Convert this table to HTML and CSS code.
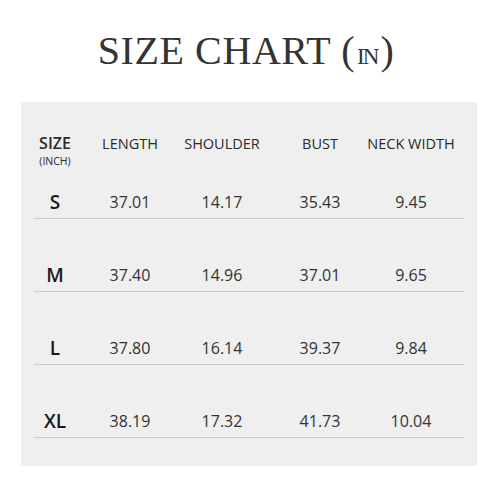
FILE: index.html
```html
<!DOCTYPE html>
<html>
<head>
<meta charset="utf-8">
<link rel="stylesheet" href="styles.css">
</head>
<body>
<div class="page">
  <h1 class="title">SIZE CHART <span class="paren">(</span><span class="unit">IN</span><span class="paren">)</span></h1>
  <div class="panel">
    <div class="row head">
      <div class="cell size-head"><span class="size-word">SIZE</span><span class="inch">(INCH)</span></div>
      <div class="cell">LENGTH</div>
      <div class="cell">SHOULDER</div>
      <div class="cell">BUST</div>
      <div class="cell">NECK WIDTH</div>
    </div>
    <div class="row data first">
      <div class="cell label">S</div>
      <div class="cell">37.01</div>
      <div class="cell">14.17</div>
      <div class="cell">35.43</div>
      <div class="cell">9.45</div>
    </div>
    <div class="row data">
      <div class="cell label">M</div>
      <div class="cell">37.40</div>
      <div class="cell">14.96</div>
      <div class="cell">37.01</div>
      <div class="cell">9.65</div>
    </div>
    <div class="row data">
      <div class="cell label">L</div>
      <div class="cell">37.80</div>
      <div class="cell">16.14</div>
      <div class="cell">39.37</div>
      <div class="cell">9.84</div>
    </div>
    <div class="row data">
      <div class="cell label">XL</div>
      <div class="cell">38.19</div>
      <div class="cell">17.32</div>
      <div class="cell">41.73</div>
      <div class="cell">10.04</div>
    </div>
  </div>
</div>
</body>
</html>
```

FILE: styles.css
```css
* { box-sizing: border-box; }
html, body { margin: 0; padding: 0; background: #fff; }
.page { width: 500px; height: 500px; overflow: hidden; }

.title {
  margin: 0;
  height: 102px;
  padding: 29px 8px 0 0;
  text-align: center;
  font-family: "Liberation Serif", serif;
  font-weight: normal;
  font-size: 40px;
  line-height: 44px;
  letter-spacing: 0.6px;
  color: #333;
}
.paren { font-size: 40px; }
.unit {
  font-size: 23px;
  letter-spacing: -2px;
  padding: 0 3px 0 2px;
}

.panel {
  margin: 0 23px 0 21px;
  height: 364px;
  background: #efefef;
  padding: 0 13px;
  font-family: "Open Sans", "Noto Sans", sans-serif;
  color: #333;
}

.row {
  display: grid;
  grid-template-columns: 42px 108px 76px 120px 62px;
  align-items: end;
}
.cell { display: flex; justify-content: center; white-space: nowrap; }

.head {
  height: 60px;
  align-items: start;
  padding-top: 33px;
  font-size: 14.5px;
  line-height: 16px;
  color: #2a2a2a;
}
.head .cell { padding-top: 1px; }
.size-head { flex-direction: column; align-items: center; padding-top: 1px !important; }
.size-word { font-size: 16px; line-height: 14px; font-weight: 600; }
.inch { font-size: 10.5px; line-height: 12px; margin-top: 5px; }

.data {
  height: 73px;
  padding-bottom: 6px;
  border-bottom: 1px solid #c9c9c9;
  font-size: 16px;
  line-height: 20px;
}
.data.first { height: 57px; }
.label { font-size: 19px; font-weight: 600; color: #1a1a1a; }
```
